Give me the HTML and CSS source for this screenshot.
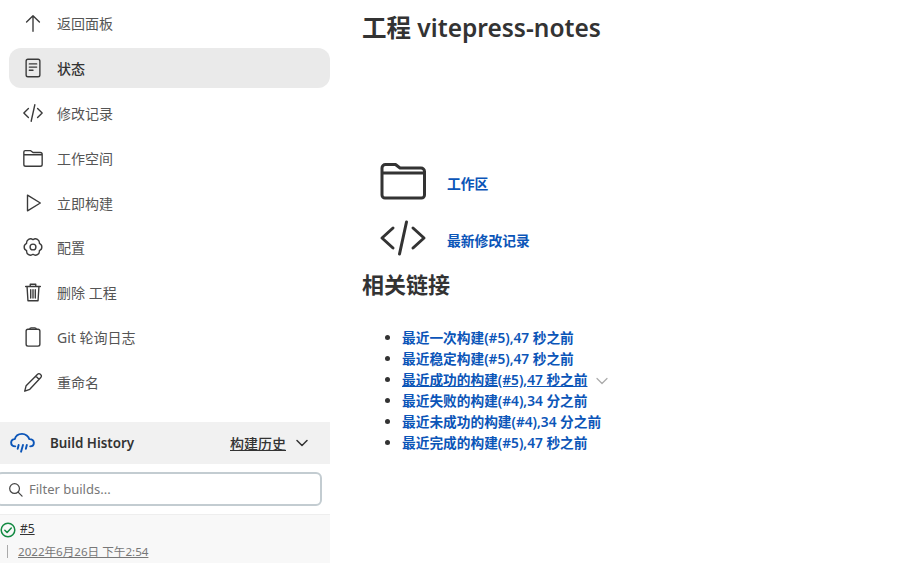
FILE: index.html
```html
<!DOCTYPE html>
<html lang="zh-CN">
<head>
    <meta charset="UTF-8">
    <title>vitepress-notes</title>
    <link rel="stylesheet" href="styles.css">
</head>
<body>
    <div class="page">
        <!-- Side panel -->
        <aside class="side-panel">
            <ul class="task-list">
                <li class="task"><svg class="task-icon" viewBox="0 0 24 24"><path d="M12 21V4M5 11l7-7 7 7"/></svg><a href="#">返回面板</a></li>
                <li class="task active"><svg class="task-icon" viewBox="0 0 24 24"><rect x="4.5" y="2.5" width="15" height="19" rx="2"/><path d="M8 7.5h8M8 11h8M8 14.5h4"/></svg><a href="#">状态</a></li>
                <li class="task"><svg class="task-icon" viewBox="0 0 24 24"><path d="M7 7l-5 5 5 5M17 7l5 5-5 5M14 3l-4 18"/></svg><a href="#">修改记录</a></li>
                <li class="task"><svg class="task-icon" viewBox="0 0 24 24"><path d="M2 19V5.500a1.500 1.500 0 0 1 1.500-1.500h6l2.500 2h8a2 2 0 0 1 2 2v11a2 2 0 0 1-2 2H4a2 2 0 0 1-2-2zM2 8.500h20"/></svg><a href="#">工作空间</a></li>
                <li class="task"><svg class="task-icon" viewBox="0 0 24 24"><path d="M6 3.500v17l14-8.500z"/></svg><a href="#">立即构建</a></li>
                <li class="task"><svg class="task-icon" viewBox="0 0 24 24"><circle cx="12" cy="12" r="3.200"/><path d="M12 4A4.300 4.300 0 0 1 18.930 8A4.300 4.300 0 0 1 18.930 16A4.300 4.300 0 0 1 12 20A4.300 4.300 0 0 1 5.070 16A4.300 4.300 0 0 1 5.070 8A4.300 4.300 0 0 1 12 4z"/></svg><a href="#">配置</a></li>
                <li class="task"><svg class="task-icon" viewBox="0 0 24 24"><path d="M4 6h16M9 6V3.500h6V6M5.500 6l1 15.500h11l1-15.500M9.500 9.500v9M12 9.500v9M14.500 9.500v9"/></svg><a href="#">删除 工程</a></li>
                <li class="task"><svg class="task-icon" viewBox="0 0 24 24"><rect x="4.500" y="3.500" width="15" height="18.500" rx="2"/><path d="M8.500 3.500a1.500 1.500 0 0 1 1.500-1.500h4a1.500 1.500 0 0 1 1.500 1.500"/></svg><a href="#">Git 轮询日志</a></li>
                <li class="task"><svg class="task-icon" viewBox="0 0 24 24"><path d="M3 22l1.500-6L17 3.500a2 2 0 0 1 3 0l.5.500a2 2 0 0 1 0 3L8.500 20zM15 5.500l3.500 3.500"/></svg><a href="#">重命名</a></li>
            </ul>

            <!-- Build history -->
            <div class="history-head">
                <svg class="cloud-icon" viewBox="0 0 26 24"><path d="M5.500 15.500C2.500 15.500 1.200 13.500 1.200 11.500S3 7.800 5 8c.8-3.500 4-5.500 7.500-5.500S19.500 5 20 8c2.800-.2 4.800 1.600 4.800 3.800s-1.500 3.700-3.800 3.700M9 14l-1 4M13.500 14l-2 7M17.500 14l-1 4"/></svg>
                <span class="history-title">Build History</span>
                <a class="history-link" href="#">构建历史</a>
                <svg class="history-caret" viewBox="0 0 12 8"><path d="M1 1.500l5 5 5-5"/></svg>
            </div>
            <div class="filter-wrap">
                <div class="filter-box">
                    <svg class="search-icon" viewBox="0 0 16 16"><circle cx="7" cy="7" r="5.200"/><path d="M11 11l4 4"/></svg>
                    <span>Filter builds...</span>
                </div>
            </div>
            <div class="build-row">
                <div class="build-name">
                    <svg class="ok-icon" viewBox="0 0 16 16"><circle cx="8" cy="8" r="6.800"/><path d="M4.800 8.200l2.300 2.300 4.200-4.400"/></svg>
                    <a href="#">#5</a>
                </div>
                <div class="build-time"><a href="#">2022年6月26日 下午2:54</a></div>
            </div>
        </aside>

        <!-- Main content -->
        <main class="main-panel">
            <h1>工程 vitepress-notes</h1>
            <div class="main-links">
                <div class="main-link">
                    <svg class="big-icon" viewBox="0 0 48 40"><path d="M3 33V7a3.500 3.500 0 0 1 3.500-3.500h10l4.500 3.500h21a3.500 3.500 0 0 1 3.500 3.500v23.500a3 3 0 0 1-3 3H6a3 3 0 0 1-3-3zM3 12h42.500"/></svg>
                    <a href="#">工作区</a>
                </div>
                <div class="main-link">
                    <svg class="big-icon" viewBox="0 0 48 36"><path d="M14 8L3 18l11 10M34 8l11 10-11 10M27.500 2l-7 32"/></svg>
                    <a href="#">最新修改记录</a>
                </div>
            </div>
            <h2>相关链接</h2>
            <ul class="permalinks">
                <li><a href="#">最近一次构建(#5),47 秒之前</a></li>
                <li><a href="#">最近稳定构建(#5),47 秒之前</a></li>
                <li><a class="hovered" href="#">最近成功的构建(#5),47 秒之前</a><svg class="link-caret" viewBox="0 0 12 8"><path d="M1 1.500l5 5 5-5"/></svg></li>
                <li><a href="#">最近失败的构建(#4),34 分之前</a></li>
                <li><a href="#">最近未成功的构建(#4),34 分之前</a></li>
                <li><a href="#">最近完成的构建(#5),47 秒之前</a></li>
            </ul>
        </main>
    </div>
</body>
</html>
```

FILE: styles.css
```css
/* Global Styles */
html,
body {
    margin: 0;
    height: 100%;
    overflow: hidden;
}

body {
    font-family: "Noto Sans", "Noto Sans CJK SC", sans-serif;
    font-size: 14px;
    color: #333;
    background-color: white;
}

a {
    color: inherit;
    text-decoration: none;
}

svg {
    fill: none;
    stroke: currentColor;
    stroke-linecap: round;
    stroke-linejoin: round;
    flex-shrink: 0;
}

.page {
    display: flex;
    height: 563px;
}

/* Side Panel */
.side-panel {
    width: 330px;
    flex-shrink: 0;
}

.task-list {
    list-style: none;
    margin: 0;
    padding: 3px 0 0 9px;
    display: flex;
    flex-direction: column;
    gap: 4.9px;
}

.task {
    display: flex;
    align-items: center;
    height: 40px;
    padding-left: 13px;
    border-radius: 12px;
    color: #555;
}

.task.active {
    background-color: #eaeaea;
    color: #333;
    font-weight: 500;
}

.task-icon {
    width: 22px;
    height: 22px;
    stroke-width: 1.500;
    color: #3a3a3a;
    margin-right: 13px;
}

/* Build History */
.history-head {
    display: flex;
    align-items: center;
    height: 42px;
    margin-top: 20px;
    padding-left: 10px;
    background-color: #f1f1f1;
}

.cloud-icon {
    width: 25px;
    height: 24px;
    stroke-width: 2;
    color: #0b55b8;
}

.history-title {
    margin-left: 15px;
    font-size: 13.400px;
    font-weight: 600;
    color: #333;
}

.history-link {
    margin-left: auto;
    font-weight: 500;
    color: #333;
    text-decoration: underline;
}

.history-caret {
    width: 12px;
    height: 8px;
    margin: 0 22px 0 10px;
    stroke-width: 1.500;
    color: #333;
}

.filter-wrap {
    padding: 8px 8px 8px 0;
    border-bottom: 1px solid #eee;
}

.filter-box {
    display: flex;
    align-items: center;
    height: 30px;
    margin-left: -4px;
    padding-left: 10px;
    border: 2px solid #c3ccd1;
    border-radius: 6px;
    font-size: 13px;
    color: #777;
}

.search-icon {
    width: 15px;
    height: 15px;
    margin-right: 6px;
    stroke-width: 1.300;
    color: #444;
}

.build-row {
    height: 50px;
    padding-top: 3px;
    box-sizing: border-box;
    background-color: #f8f8f8;
}

.build-name {
    display: flex;
    align-items: center;
    height: 20px;
    font-size: 12px;
}

.build-name a {
    margin-left: 4px;
    text-decoration: underline;
}

.ok-icon {
    width: 16px;
    height: 16px;
    margin-top: 4px;
    stroke-width: 1.500;
    color: #138a42;
}

.build-time {
    margin: 7px 0 0 7px;
    padding-left: 10px;
    border-left: 1px solid #aaa;
    font-size: 11.600px;
    line-height: 13px;
    color: #777;
}

.build-time a {
    text-decoration: underline;
}

/* Main Panel */
.main-panel {
    padding-left: 32px;
}

h1 {
    margin: 11px 0 0;
    font-size: 24.500px;
    line-height: 33px;
    font-weight: 600;
    color: #333;
}

h2 {
    margin: 1px 0 0;
    font-size: 22px;
    line-height: 30px;
    font-weight: 600;
    color: #333;
}

.main-links {
    margin-top: 110px;
}

.main-link {
    display: flex;
    align-items: center;
    height: 57px;
    padding-left: 17px;
    font-size: 13.800px;
    font-weight: 600;
    color: #0b55b8;
}

.big-icon {
    width: 48px;
    height: 40px;
    margin: 0 20px 4px 0;
    stroke-width: 3;
    color: #333;
}

.permalinks {
    margin: 28px 0 0;
    padding-left: 40px;
    font-size: 13.700px;
    line-height: 21px;
    font-weight: 600;
    color: #0b55b8;
}

.permalinks li::marker {
    color: #333;
}

.hovered {
    text-decoration: underline;
}

.link-caret {
    width: 12px;
    height: 8px;
    margin-left: 9px;
    stroke-width: 1.200;
    color: #aaa;
}
```
